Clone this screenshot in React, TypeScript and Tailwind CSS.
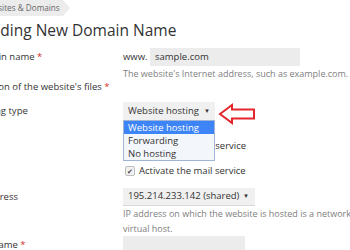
import React from "react";

const FONT = { fontFamily: '"Open Sans", "Liberation Sans", sans-serif' };

function Req() {
  return <span className="text-[#d0312d]"> *</span>;
}

function Row({ label, children, className = "" }: { label: React.ReactNode; children: React.ReactNode; className?: string }) {
  return (
    <div className={"flex " + className}>
      <div className="w-[151px] shrink-0 whitespace-nowrap text-[9.5px] leading-[18px] text-[#333]">{label}</div>
      <div className="flex-1">{children}</div>
    </div>
  );
}

function Check({ label }: { label: string }) {
  return (
    <label className="flex h-[12px] items-center gap-[4px] whitespace-nowrap pl-[2px] text-[9.5px] text-[#333]">
      <span className="flex h-[10px] w-[10px] items-center justify-center rounded-[2px] border border-[#bdbdbd] bg-[#f2f2f2] text-[7px] leading-none text-[#444]">✔</span>
      {label}
    </label>
  );
}

export default function App() {
  return (
    <div className="h-[250px] w-[350px] overflow-hidden bg-white" style={FONT}>
      <div className="-ml-[21px] flex h-[16px]">
        <div className="flex items-center bg-[#ececec] pl-[2px] pr-[3px] text-[8.2px] text-[#666]">Websites &amp; Domains</div>
        <div className="h-0 w-0 border-y-[8px] border-l-[7px] border-y-transparent border-l-[#ececec]" />
      </div>

      <h1 className="-ml-[19px] mt-[4px] whitespace-nowrap text-[15.5px] leading-[20px] text-[#333]">Adding New Domain Name</h1>

      <div className="-ml-[28px] mt-[8px]">
        <Row label={<>Domain name<Req /></>}>
          <div className="flex items-center text-[9.5px] text-[#333]">
            <span className="w-[27px]">www.</span>
            <div className="flex h-[18px] w-[150px] items-center bg-[#ececec] px-[5px]">sample.com</div>
          </div>
          <div className="mt-[2px] whitespace-nowrap text-[9px] leading-[12px] text-[#808080]">The website's Internet address, such as example.com.</div>
        </Row>

        <div className="mt-[1px] whitespace-nowrap text-[9.5px] leading-[12px] text-[#333]">
          Location of the website's files<Req />
        </div>

        <Row label="Hosting type" className="mt-[9px]">
          <div className="relative">
            <div className="flex items-start gap-[3px]">
              <div className="flex h-[18px] w-[92px] items-center justify-between bg-[#f0f0f0] pl-[5px] pr-[5px] text-[9.5px] text-[#333]">
                Website hosting
                <span className="text-[6px]">▼</span>
              </div>
              <svg width="38" height="22" viewBox="0 0 38 22" className="mt-[1px]">
                <path d="M2 11 L14 2 L14 6.5 L36 6.5 L36 15.5 L14 15.5 L14 20 Z" fill="none" stroke="#e3262b" strokeWidth="2" />
              </svg>
            </div>
            <div className="mt-[15px] flex flex-col gap-[13px]">
              <Check label="Activate the DNS service" />
              <Check label="Activate the mail service" />
            </div>
            <div className="absolute left-0 top-[18px] w-[92px] border border-[#9fb4d6] bg-[#f3f7fc] text-[9.5px] leading-[13px] text-[#333]">
              <div className="bg-[#3d84f6] px-[4px] text-white">Website hosting</div>
              <div className="px-[4px]">Forwarding</div>
              <div className="px-[4px]">No hosting</div>
            </div>
          </div>
        </Row>

        <Row label="IP address" className="mt-[11px]">
          <div className="flex h-[18px] w-[132px] items-center justify-between border-b border-[#d9d9d9] bg-[#f0f0f0] pl-[5px] pr-[6px] text-[9.5px] text-[#333]">
            195.214.233.142 (shared)
            <span className="text-[6px]">▼</span>
          </div>
          <div className="whitespace-nowrap text-[9px] leading-[15px] text-[#808080]">
            IP address on which the website is hosted is a network<br />virtual host.
          </div>
        </Row>

        <Row label={<>Username<Req /></>}>
          <div className="h-[18px] w-[122px] bg-[#ececec]" />
        </Row>
      </div>
    </div>
  );
}
